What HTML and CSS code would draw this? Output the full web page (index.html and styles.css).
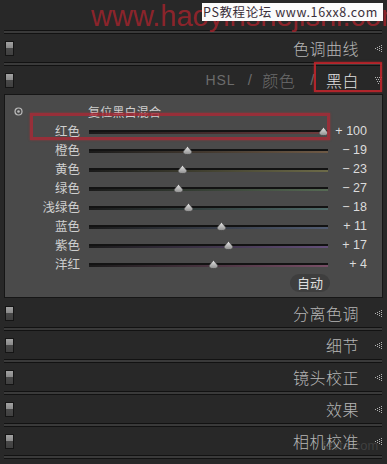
FILE: index.html
```html
<!DOCTYPE html>
<html lang="zh-CN">

<head>
    <meta charset="UTF-8">
    <title>黑白 - 修改照片</title>
    <link rel="stylesheet" href="styles.css">
</head>

<body>
    <div class="screen">
        <!-- top strip with watermarks -->
        <div class="topbar">
            <div class="wm-red">www.haoyinshejishi.com</div>
            <div class="wm-box">PS教程论坛 www.16xx8.com</div>
        </div>

        <div class="sep"></div>
        <div class="header">
            <span class="switch"></span>
            <span class="title">色调曲线</span>
            <svg class="tri" width="9" height="9" viewBox="0 0 9 9">
                <path d="M1.5 4v1M3.5 3v3M5.5 2v5M7.5 1v7" stroke="#b4b4b4" stroke-width="1" stroke-dasharray="1 1" />
            </svg>
        </div>
        <div class="sep"></div>
        <div class="header">
            <span class="switch"></span>
            <span class="title tabs">
                <span class="dim latin">HSL</span>
                <span class="dim slash">/</span>
                <span class="dim">颜色</span>
                <span class="dim slash">/</span>
                <span class="active">黑白</span>
            </span>
            <svg class="tri" width="9" height="9" viewBox="0 0 9 9">
                <path d="M1 1.5h7M2 3.5h5M3 5.5h3M4 7.5h1" stroke="#b4b4b4" stroke-width="1" stroke-dasharray="1 1" />
            </svg>
        </div>

        <!-- black & white mix panel -->
        <div class="panel">
            <div class="reset-row">
                <svg class="reset-icon" width="9" height="9" viewBox="0 0 9 9">
                    <circle cx="4.5" cy="4.5" r="3.5" fill="none" stroke="#bcbcbc" stroke-width="1.2" />
                    <circle cx="4.5" cy="4.5" r="1.3" fill="#bcbcbc" />
                </svg>
                <span class="reset-label">复位黑白混合</span>
            </div>
            <div id="sliders"></div>
            <div class="auto-row">
                <span class="auto-btn">自动</span>
            </div>
        </div>

        <div class="header gap-top">
            <span class="switch"></span>
            <span class="title">分离色调</span>
            <svg class="tri" width="9" height="9" viewBox="0 0 9 9">
                <path d="M1.5 4v1M3.5 3v3M5.5 2v5M7.5 1v7" stroke="#b4b4b4" stroke-width="1" stroke-dasharray="1 1" />
            </svg>
        </div>
        <div class="sep"></div>
        <div class="header">
            <span class="switch"></span>
            <span class="title">细节</span>
            <svg class="tri" width="9" height="9" viewBox="0 0 9 9">
                <path d="M1.5 4v1M3.5 3v3M5.5 2v5M7.5 1v7" stroke="#b4b4b4" stroke-width="1" stroke-dasharray="1 1" />
            </svg>
        </div>
        <div class="sep"></div>
        <div class="header">
            <span class="switch"></span>
            <span class="title">镜头校正</span>
            <svg class="tri" width="9" height="9" viewBox="0 0 9 9">
                <path d="M1.5 4v1M3.5 3v3M5.5 2v5M7.5 1v7" stroke="#b4b4b4" stroke-width="1" stroke-dasharray="1 1" />
            </svg>
        </div>
        <div class="sep"></div>
        <div class="header">
            <span class="switch"></span>
            <span class="title">效果</span>
            <svg class="tri" width="9" height="9" viewBox="0 0 9 9">
                <path d="M1.5 4v1M3.5 3v3M5.5 2v5M7.5 1v7" stroke="#b4b4b4" stroke-width="1" stroke-dasharray="1 1" />
            </svg>
        </div>
        <div class="sep"></div>
        <div class="header">
            <span class="switch"></span>
            <span class="title">相机校准</span>
            <svg class="tri" width="9" height="9" viewBox="0 0 9 9">
                <path d="M1.5 4v1M3.5 3v3M5.5 2v5M7.5 1v7" stroke="#b4b4b4" stroke-width="1" stroke-dasharray="1 1" />
            </svg>
        </div>
        <div class="sep"></div>

        <!-- red highlight boxes drawn over the screenshot -->
        <div class="mark mark-tab"></div>
        <div class="mark mark-row"></div>
        <div class="wm-corner">fevte.com</div>
    </div>

    <script>
        const sliders = [
            { name: '红色', value: 100, tint: '#6e3c3e' },
            { name: '橙色', value: -19, tint: '#6e5a46' },
            { name: '黄色', value: -23, tint: '#6c6a48' },
            { name: '绿色', value: -27, tint: '#566a54' },
            { name: '浅绿色', value: -18, tint: '#4e6a68' },
            { name: '蓝色', value: 11, tint: '#515c72' },
            { name: '紫色', value: 17, tint: '#64507a' },
            { name: '洋红', value: 4, tint: '#784e66' }
        ];

        function formatValue(v) {
            if (v > 0) return '+ ' + v;
            if (v < 0) return '\u2212 ' + Math.abs(v);
            return '0';
        }

        const list = document.getElementById('sliders');
        sliders.forEach(s => {
            const row = document.createElement('div');
            row.className = 'slider-row';

            const label = document.createElement('span');
            label.className = 'slider-label';
            label.textContent = s.name;

            const track = document.createElement('span');
            track.className = 'track';
            track.style.background = `linear-gradient(to right, #1a1a1a, ${s.tint})`;

            // thumb travels between 5px from each end of the track
            const ratio = (s.value + 100) / 200;
            const thumb = document.createElement('span');
            thumb.className = 'thumb';
            thumb.style.left = `calc(5px + ${ratio} * (100% - 10px))`;
            thumb.innerHTML = '<svg width="11" height="9" viewBox="0 0 11 9"><defs><linearGradient id="g" x1="0" y1="0" x2="0" y2="1"><stop offset="0" stop-color="#e8e8e8"/><stop offset="1" stop-color="#8c8c8c"/></linearGradient></defs><path d="M5.5 0.3 L9.6 5.2 Q10.6 8.6 5.5 8.6 Q0.4 8.6 1.4 5.2 Z" fill="url(#g)" stroke="#3a3a3a" stroke-width="0.6"/></svg>';
            track.appendChild(thumb);

            const value = document.createElement('span');
            value.className = 'slider-value';
            value.textContent = formatValue(s.value);

            row.appendChild(label);
            row.appendChild(track);
            row.appendChild(value);
            list.appendChild(row);
        });
    </script>
</body>

</html>
```

FILE: styles.css
```css
/* General */
body {
    margin: 0;
    background-color: #282828;
    font-family: "Noto Sans CJK SC", "Noto Sans", sans-serif;
    color: #b8b8b8;
}

.screen {
    position: relative;
    width: 387px;
    height: 464px;
    overflow: hidden;
}

/* Top strip */
.topbar {
    height: 30px;
}

.wm-red {
    position: absolute;
    left: 91px;
    top: 0;
    font-family: "Liberation Sans", Arial, sans-serif;
    font-size: 29px;
    line-height: 32px;
    color: rgba(185, 35, 45, 0.7);
    white-space: nowrap;
}

.wm-box {
    position: absolute;
    left: 202px;
    top: 3px;
    width: 180px;
    height: 18px;
    background-color: #fbfbfb;
    color: #3a2f3a;
    font-size: 12.5px;
    line-height: 18px;
    padding-left: 1px;
    white-space: nowrap;
    overflow: hidden;
    letter-spacing: 0.6px;
}

.wm-corner {
    position: absolute;
    left: 322px;
    top: 438px;
    font-family: "Liberation Sans", Arial, sans-serif;
    font-size: 13px;
    color: rgba(140, 140, 140, 0.25);
}

/* Section separators and headers */
.sep {
    height: 2px;
    margin: 0 5px 0 4px;
    background-color: #3a3a3a;
    border-top: 1px solid #121212;
    border-bottom: 1px solid #121212;
}

.header {
    height: 28px;
    display: flex;
    align-items: center;
    padding: 0 4px 0 5px;
}

.header.gap-top {
    margin-top: 1px;
}

.switch {
    width: 7px;
    height: 13px;
    border: 1px solid #151515;
    background: linear-gradient(to bottom, #a2a2a2 0, #8a8a8a 45%, #484848 50%, #404040 100%);
}

.title {
    margin-left: auto;
    font-size: 16px;
    font-weight: 300;
    line-height: 28px;
    color: #b6b6b6;
    letter-spacing: 0.5px;
}

.tri {
    margin-left: 15px;
}

.tabs {
    display: flex;
    align-items: center;
}

.tabs .dim {
    color: #6c6c6c;
}

.tabs .latin {
    font-family: "Liberation Sans", Arial, sans-serif;
    font-size: 14px;
    letter-spacing: 1px;
    margin-right: 12px;
}

.tabs .slash {
    font-family: "Liberation Sans", Arial, sans-serif;
    font-size: 15px;
    margin-right: 10px;
}

.tabs .dim + .dim.slash {
    margin-left: 15px;
}

.tabs .latin + .dim.slash {
    margin-left: 0;
}

.tabs .active {
    color: #e2e2e2;
    margin-left: 1px;
}

/* Black & white panel */
.panel {
    margin: 0 4px 0 4px;
    background-color: #4a4a4a;
    border: 1px solid #161616;
    padding: 7px 0 5px;
}

.reset-row {
    height: 19px;
    display: flex;
    align-items: center;
}

.reset-icon {
    margin-left: 9px;
}

.reset-label {
    margin-left: 65px;
    font-size: 12px;
    color: #cfcfcf;
    letter-spacing: 0.2px;
}

.slider-row {
    height: 19px;
    display: flex;
    align-items: center;
}

.slider-label {
    width: 75px;
    text-align: right;
    font-size: 12.5px;
    color: #cfcfcf;
}

.track {
    position: relative;
    width: 239px;
    height: 2px;
    margin-left: 9px;
    border-top: 2px solid #131313;
    margin-top: 2px;
}

.thumb {
    position: absolute;
    bottom: -2px;
    width: 11px;
    height: 9px;
    margin-left: -5px;
    line-height: 0;
}

.slider-value {
    width: 39px;
    text-align: right;
    font-family: "Liberation Sans", Arial, sans-serif;
    font-size: 12.5px;
    color: #dcdcdc;
    margin-top: 1px;
}

.auto-row {
    display: flex;
    justify-content: flex-end;
    padding: 1px 52px 0 0;
}

.auto-btn {
    height: 18px;
    line-height: 18px;
    padding: 0 7px;
    border-radius: 9px;
    background-color: #3e3e3e;
    font-size: 13px;
    color: #dedede;
}

/* Red highlight marks */
.mark {
    position: absolute;
    border: 2px solid rgba(200, 36, 44, 0.85);
    box-shadow: 0 0 2px rgba(200, 36, 44, 0.6);
}

.mark-tab {
    left: 314px;
    top: 62px;
    width: 64px;
    height: 26px;
}

.mark-row {
    left: 30px;
    top: 113px;
    width: 294px;
    height: 21px;
    border-width: 3px;
    border-color: rgba(170, 40, 52, 0.8);
}
```
